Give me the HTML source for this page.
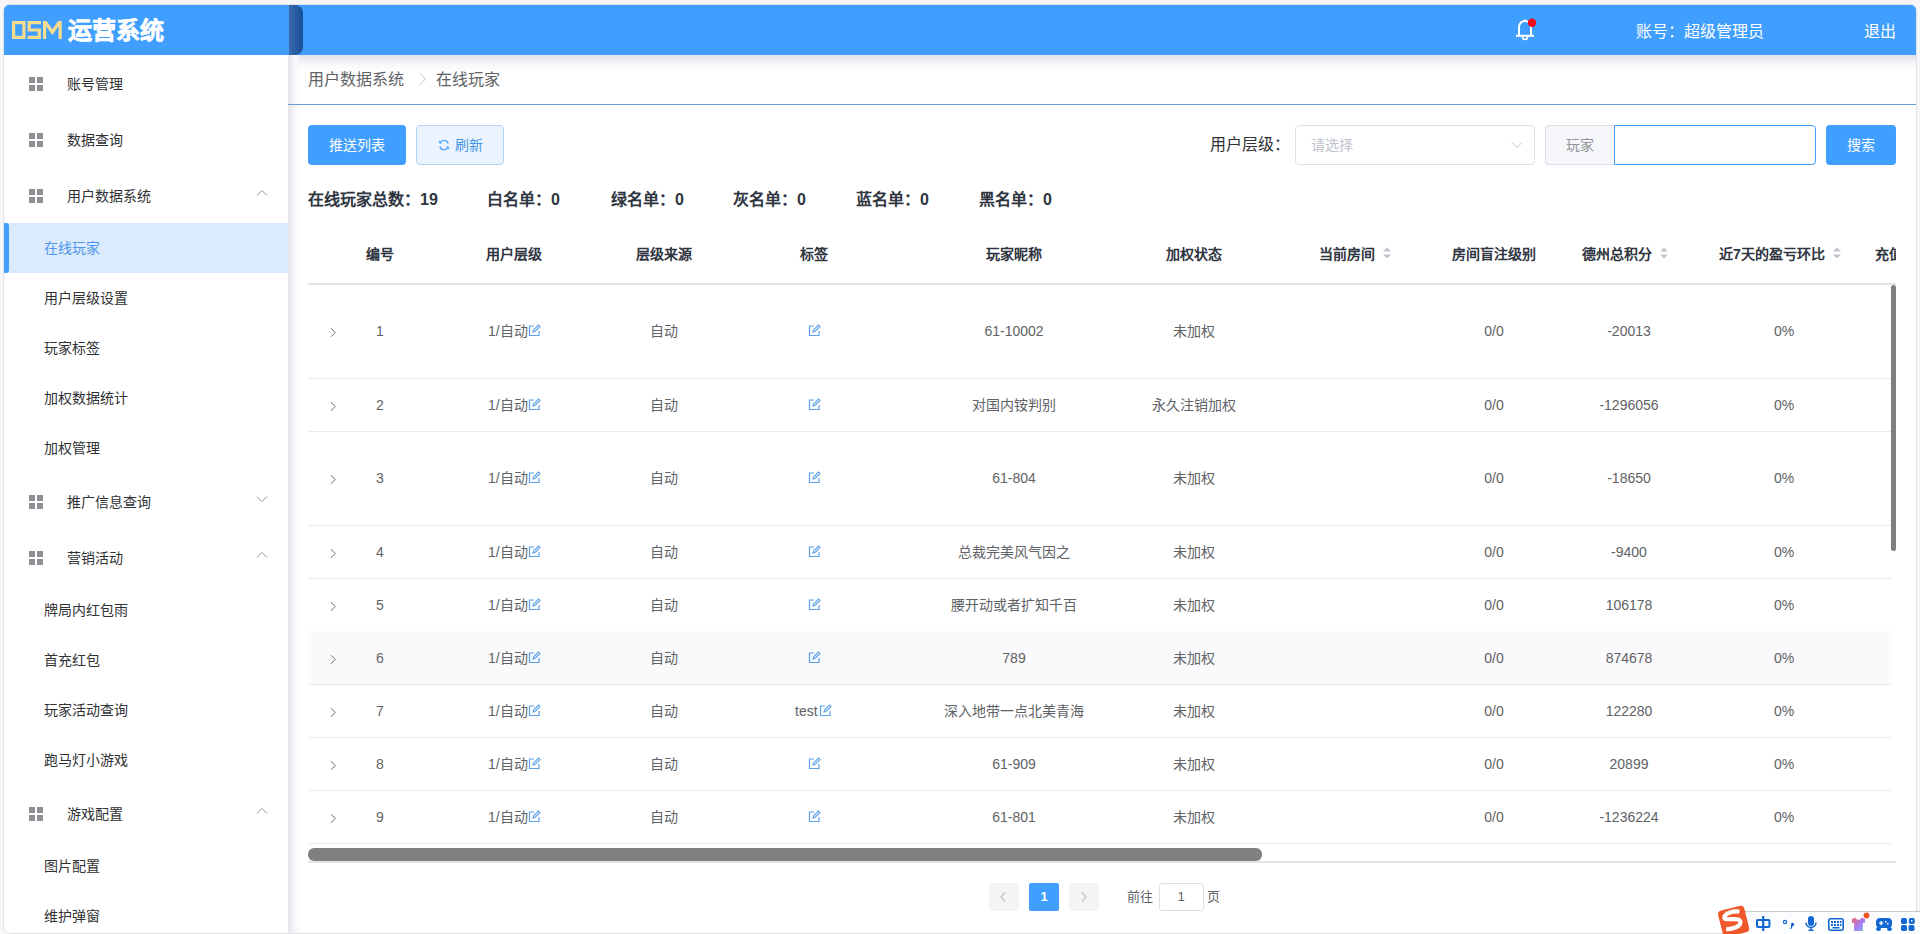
<!DOCTYPE html><html lang="zh-CN"><head><meta charset="utf-8"><style>
*{box-sizing:border-box;margin:0;padding:0}
html,body{width:1920px;height:934px;overflow:hidden}
body{background:#f6f5f7;font-family:"Liberation Sans",sans-serif;color:#303133;position:relative}
.abs{position:absolute}
.t{position:absolute;white-space:nowrap;line-height:20px;height:20px}
.c{transform:translateX(-50%)}
#header{left:4px;top:5px;width:1912px;height:50px;background:#409eff;border-radius:5px 5px 0 0;z-index:3}
#side{left:4px;top:55px;width:284px;height:878px;background:#fff;z-index:2;border-radius:0 0 0 8px}
#main{left:288px;top:55px;width:1628px;height:878px;background:#fff;z-index:0;border-radius:0 0 8px 0}
.mi{font-size:14px;color:#303133}
.grid{position:absolute;left:29px;width:14px;height:14px}
.grid i{position:absolute;width:6px;height:6px;background:#8f8f95}
.th{font-size:14px;font-weight:bold;color:#2f3540}
.td{font-size:14px;color:#606266}
.hl{position:absolute;left:308px;width:1584px;height:1px;background:#ebebef}
</style></head><body>
<div class="abs" style="left:3px;top:4px;width:1914px;height:930px;border:1px solid #e2e1e5;border-radius:6px 6px 9px 9px;background:#fff"></div>
<div id="header" class="abs">
<svg class="abs" style="left:4px;top:11px" width="56" height="24" viewBox="8 16 56 24">
<g fill="#f8dc8e">
<path d="M12 21h13.5v18H12z M15.2 24.2v11.6h7.1V24.2z" fill-rule="evenodd"/>
<path d="M27.6 21h13.3v3.2H30.8v4.2h10.1V39H27.6v-3.2h10.1v-4.2H27.6z"/>
<path d="M43 39V21h3.6l5.75 8.2L58.1 21h3.65v18h-3.2V26.3l-6.2 8.6-6.2-8.6V39z"/>
</g></svg>
<div class="t" style="left:64px;top:11px;height:30px;line-height:30px;font-size:24px;font-weight:bold;color:#fff;-webkit-text-stroke:0.5px #fff">运营系统</div>
</div>
<div class="abs" style="left:289px;top:5px;width:14px;height:50px;z-index:4;background:linear-gradient(90deg,#3a6aad,#174e98);border-radius:0 8px 8px 0"></div>
<svg class="abs" style="left:1512px;top:16px;z-index:5" width="26" height="26" viewBox="1512 16 26 26">
<path d="M1519 35.5V27a6 6 0 0 1 12 0v8.5" fill="none" stroke="#fff" stroke-width="2"/>
<path d="M1516 35.8h18" stroke="#fff" stroke-width="2"/>
<path d="M1522.5 37a2.5 2.5 0 0 0 5 0" fill="none" stroke="#fff" stroke-width="1.6"/>
<circle cx="1525" cy="20.6" r="1.2" fill="#fff"/>
<circle cx="1532" cy="22.8" r="4.2" fill="#f5081a"/>
</svg>
<div class="t" style="left:1636px;top:22px;font-size:16px;color:#fff;z-index:5">账号：超级管理员</div>
<div class="t" style="left:1864px;top:22px;font-size:16px;color:#fff;z-index:5">退出</div>
<div id="side" class="abs"></div>
<div class="grid" style="top:77px;z-index:3"><i style="left:0;top:0"></i><i style="left:8px;top:0"></i><i style="left:0;top:8px"></i><i style="left:8px;top:8px"></i></div>
<div class="t mi" style="left:67px;top:74px;z-index:3">账号管理</div>
<div class="grid" style="top:133px;z-index:3"><i style="left:0;top:0"></i><i style="left:8px;top:0"></i><i style="left:0;top:8px"></i><i style="left:8px;top:8px"></i></div>
<div class="t mi" style="left:67px;top:130px;z-index:3">数据查询</div>
<div class="grid" style="top:189px;z-index:3"><i style="left:0;top:0"></i><i style="left:8px;top:0"></i><i style="left:0;top:8px"></i><i style="left:8px;top:8px"></i></div>
<div class="t mi" style="left:67px;top:186px;z-index:3">用户数据系统</div>
<svg class="abs" style="left:256px;top:189px;z-index:3" width="12" height="8" viewBox="0 0 12 8"><path d="M1 6.5L6 1.5L11 6.5" fill="none" stroke="#909399" stroke-width="1"/></svg>
<div class="abs" style="left:4px;top:223px;width:284px;height:50px;background:#dbeafc;z-index:3"></div>
<div class="abs" style="left:4px;top:223px;width:5px;height:50px;background:#409eff;border-radius:0 3px 3px 0;z-index:3"></div>
<div class="t mi" style="left:44px;top:238px;color:#4e97e8;z-index:4">在线玩家</div>
<div class="t mi" style="left:44px;top:288px;z-index:3">用户层级设置</div>
<div class="t mi" style="left:44px;top:338px;z-index:3">玩家标签</div>
<div class="t mi" style="left:44px;top:388px;z-index:3">加权数据统计</div>
<div class="t mi" style="left:44px;top:438px;z-index:3">加权管理</div>
<div class="grid" style="top:495px;z-index:3"><i style="left:0;top:0"></i><i style="left:8px;top:0"></i><i style="left:0;top:8px"></i><i style="left:8px;top:8px"></i></div>
<div class="t mi" style="left:67px;top:492px;z-index:3">推广信息查询</div>
<svg class="abs" style="left:256px;top:495px;z-index:3" width="12" height="8" viewBox="0 0 12 8"><path d="M1 1.5L6 6.5L11 1.5" fill="none" stroke="#909399" stroke-width="1"/></svg>
<div class="grid" style="top:551px;z-index:3"><i style="left:0;top:0"></i><i style="left:8px;top:0"></i><i style="left:0;top:8px"></i><i style="left:8px;top:8px"></i></div>
<div class="t mi" style="left:67px;top:548px;z-index:3">营销活动</div>
<svg class="abs" style="left:256px;top:551px;z-index:3" width="12" height="8" viewBox="0 0 12 8"><path d="M1 6.5L6 1.5L11 6.5" fill="none" stroke="#909399" stroke-width="1"/></svg>
<div class="t mi" style="left:44px;top:600px;z-index:3">牌局内红包雨</div>
<div class="t mi" style="left:44px;top:650px;z-index:3">首充红包</div>
<div class="t mi" style="left:44px;top:700px;z-index:3">玩家活动查询</div>
<div class="t mi" style="left:44px;top:750px;z-index:3">跑马灯小游戏</div>
<div class="grid" style="top:807px;z-index:3"><i style="left:0;top:0"></i><i style="left:8px;top:0"></i><i style="left:0;top:8px"></i><i style="left:8px;top:8px"></i></div>
<div class="t mi" style="left:67px;top:804px;z-index:3">游戏配置</div>
<svg class="abs" style="left:256px;top:807px;z-index:3" width="12" height="8" viewBox="0 0 12 8"><path d="M1 6.5L6 1.5L11 6.5" fill="none" stroke="#909399" stroke-width="1"/></svg>
<div class="t mi" style="left:44px;top:856px;z-index:3">图片配置</div>
<div class="t mi" style="left:44px;top:906px;z-index:3">维护弹窗</div>
<div id="main" class="abs"></div>
<div class="abs" style="left:288px;top:55px;width:1628px;height:16px;background:linear-gradient(180deg,#e2e1e6 0,#e8e7eb 3px,#f6f5f8 8px,rgba(255,255,255,0) 16px)"></div>
<div class="abs" style="left:288px;top:55px;width:13px;height:878px;background:linear-gradient(90deg,#e4e3e7 0,#efeef2 4px,#f8f7fa 8px,rgba(255,255,255,0) 13px)"></div>
<div class="t" style="left:308px;top:70px;font-size:16px;color:#606266">用户数据系统</div>
<svg class="abs" style="left:418px;top:72px" width="10" height="14" viewBox="0 0 10 14"><path d="M1.5 1L7.5 7L1.5 13" fill="none" stroke="#c0c4cc" stroke-width="1"/></svg>
<div class="t" style="left:436px;top:70px;font-size:16px;color:#606266">在线玩家</div>
<div class="abs" style="left:288px;top:104px;width:1628px;height:1px;background:#6a9bd0"></div>
<div class="abs" style="left:308px;top:125px;width:98px;height:40px;background:#409eff;border-radius:4px"></div>
<div class="t" style="left:329px;top:135px;font-size:14px;color:#fff">推送列表</div>
<div class="abs" style="left:416px;top:125px;width:88px;height:40px;background:#ebf4fe;border:1px solid #b4d2f2;border-radius:4px"></div>
<svg class="abs" style="left:438px;top:139px" width="12" height="12" viewBox="0 0 12 12"><path d="M10.2 4.5A4.5 4.5 0 0 0 2 3.5M1.8 7.5A4.5 4.5 0 0 0 10 8.5" fill="none" stroke="#409eff" stroke-width="1.2"/><path d="M1.2 1.5v3h3z M10.8 10.5v-3h-3z" fill="#409eff"/></svg>
<div class="t" style="left:455px;top:135px;font-size:14px;color:#4896e8">刷新</div>
<div class="t" style="left:1210px;top:135px;font-size:16px;color:#303133">用户层级：</div>
<div class="abs" style="left:1295px;top:125px;width:240px;height:40px;border:1px solid #dcdfe6;border-radius:4px;background:#fff"></div>
<div class="t" style="left:1311px;top:135px;font-size:14px;color:#c0c4cc">请选择</div>
<svg class="abs" style="left:1511px;top:140px" width="12" height="10" viewBox="0 0 12 10"><path d="M1 2.5L6 7.5L11 2.5" fill="none" stroke="#c0c4cc" stroke-width="1"/></svg>
<div class="abs" style="left:1545px;top:125px;width:70px;height:40px;border:1px solid #dcdfe6;border-right:none;border-radius:4px 0 0 4px;background:#f5f7fa"></div>
<div class="t" style="left:1566px;top:135px;font-size:14px;color:#909399">玩家</div>
<div class="abs" style="left:1614px;top:125px;width:202px;height:40px;border:1px solid #409eff;border-radius:0 4px 4px 0;background:#fff"></div>
<div class="abs" style="left:1826px;top:125px;width:70px;height:40px;background:#409eff;border-radius:4px"></div>
<div class="t" style="left:1847px;top:135px;font-size:14px;color:#fff">搜索</div>
<div class="t" style="left:308px;top:190px;font-size:16px;font-weight:bold;color:#2f3540">在线玩家总数：19</div>
<div class="t" style="left:487px;top:190px;font-size:16px;font-weight:bold;color:#2f3540">白名单：0</div>
<div class="t" style="left:611px;top:190px;font-size:16px;font-weight:bold;color:#2f3540">绿名单：0</div>
<div class="t" style="left:733px;top:190px;font-size:16px;font-weight:bold;color:#2f3540">灰名单：0</div>
<div class="t" style="left:856px;top:190px;font-size:16px;font-weight:bold;color:#2f3540">蓝名单：0</div>
<div class="t" style="left:979px;top:190px;font-size:16px;font-weight:bold;color:#2f3540">黑名单：0</div>
<div class="t c th" style="left:380px;top:244px">编号</div>
<div class="t c th" style="left:514px;top:244px">用户层级</div>
<div class="t c th" style="left:664px;top:244px">层级来源</div>
<div class="t c th" style="left:814px;top:244px">标签</div>
<div class="t c th" style="left:1014px;top:244px">玩家昵称</div>
<div class="t c th" style="left:1194px;top:244px">加权状态</div>
<div class="t c th" style="left:1347px;top:244px">当前房间</div>
<div class="t c th" style="left:1494px;top:244px">房间盲注级别</div>
<div class="t c th" style="left:1617px;top:244px">德州总积分</div>
<div class="t c th" style="left:1772px;top:244px">近7天的盈亏环比</div>
<div class="t th" style="left:1875px;top:244px;width:21px;overflow:hidden">充值</div>
<div class="abs" style="left:308px;top:283px;width:1588px;height:2px;background:#e3e4e8"></div>
<div class="hl" style="top:378px"></div>
<svg class="abs" style="left:329px;top:327px" width="8" height="12" viewBox="0 0 8 12"><path d="M2 1.2L6.2 5.5L2 9.8" fill="none" stroke="#696b70" stroke-width="1"/></svg>
<div class="t c td" style="left:380px;top:321px">1</div>
<div class="t td" style="left:488px;top:321px">1/自动</div>
<svg class="abs" style="left:528px;top:324px" width="13" height="13" viewBox="0 0 13 13"><path d="M6 2H1.5v9.5H11V7" fill="none" stroke="#5aa0ea" stroke-width="1.2"/><path d="M5 8l0.5-2L10.5 1l1.5 1.5L7 7.5z" fill="none" stroke="#5aa0ea" stroke-width="1.1"/></svg>
<div class="t c td" style="left:664px;top:321px">自动</div>
<svg class="abs" style="left:808px;top:324px" width="13" height="13" viewBox="0 0 13 13"><path d="M6 2H1.5v9.5H11V7" fill="none" stroke="#5aa0ea" stroke-width="1.2"/><path d="M5 8l0.5-2L10.5 1l1.5 1.5L7 7.5z" fill="none" stroke="#5aa0ea" stroke-width="1.1"/></svg>
<div class="t c td" style="left:1014px;top:321px">61-10002</div>
<div class="t c td" style="left:1194px;top:321px">未加权</div>
<div class="t c td" style="left:1494px;top:321px">0/0</div>
<div class="t c td" style="left:1629px;top:321px">-20013</div>
<div class="t c td" style="left:1784px;top:321px">0%</div>
<div class="hl" style="top:431px"></div>
<svg class="abs" style="left:329px;top:401px" width="8" height="12" viewBox="0 0 8 12"><path d="M2 1.2L6.2 5.5L2 9.8" fill="none" stroke="#696b70" stroke-width="1"/></svg>
<div class="t c td" style="left:380px;top:395px">2</div>
<div class="t td" style="left:488px;top:395px">1/自动</div>
<svg class="abs" style="left:528px;top:398px" width="13" height="13" viewBox="0 0 13 13"><path d="M6 2H1.5v9.5H11V7" fill="none" stroke="#5aa0ea" stroke-width="1.2"/><path d="M5 8l0.5-2L10.5 1l1.5 1.5L7 7.5z" fill="none" stroke="#5aa0ea" stroke-width="1.1"/></svg>
<div class="t c td" style="left:664px;top:395px">自动</div>
<svg class="abs" style="left:808px;top:398px" width="13" height="13" viewBox="0 0 13 13"><path d="M6 2H1.5v9.5H11V7" fill="none" stroke="#5aa0ea" stroke-width="1.2"/><path d="M5 8l0.5-2L10.5 1l1.5 1.5L7 7.5z" fill="none" stroke="#5aa0ea" stroke-width="1.1"/></svg>
<div class="t c td" style="left:1014px;top:395px">对国内铵判别</div>
<div class="t c td" style="left:1194px;top:395px">永久注销加权</div>
<div class="t c td" style="left:1494px;top:395px">0/0</div>
<div class="t c td" style="left:1629px;top:395px">-1296056</div>
<div class="t c td" style="left:1784px;top:395px">0%</div>
<div class="hl" style="top:525px"></div>
<svg class="abs" style="left:329px;top:474px" width="8" height="12" viewBox="0 0 8 12"><path d="M2 1.2L6.2 5.5L2 9.8" fill="none" stroke="#696b70" stroke-width="1"/></svg>
<div class="t c td" style="left:380px;top:468px">3</div>
<div class="t td" style="left:488px;top:468px">1/自动</div>
<svg class="abs" style="left:528px;top:471px" width="13" height="13" viewBox="0 0 13 13"><path d="M6 2H1.5v9.5H11V7" fill="none" stroke="#5aa0ea" stroke-width="1.2"/><path d="M5 8l0.5-2L10.5 1l1.5 1.5L7 7.5z" fill="none" stroke="#5aa0ea" stroke-width="1.1"/></svg>
<div class="t c td" style="left:664px;top:468px">自动</div>
<svg class="abs" style="left:808px;top:471px" width="13" height="13" viewBox="0 0 13 13"><path d="M6 2H1.5v9.5H11V7" fill="none" stroke="#5aa0ea" stroke-width="1.2"/><path d="M5 8l0.5-2L10.5 1l1.5 1.5L7 7.5z" fill="none" stroke="#5aa0ea" stroke-width="1.1"/></svg>
<div class="t c td" style="left:1014px;top:468px">61-804</div>
<div class="t c td" style="left:1194px;top:468px">未加权</div>
<div class="t c td" style="left:1494px;top:468px">0/0</div>
<div class="t c td" style="left:1629px;top:468px">-18650</div>
<div class="t c td" style="left:1784px;top:468px">0%</div>
<div class="hl" style="top:578px"></div>
<svg class="abs" style="left:329px;top:548px" width="8" height="12" viewBox="0 0 8 12"><path d="M2 1.2L6.2 5.5L2 9.8" fill="none" stroke="#696b70" stroke-width="1"/></svg>
<div class="t c td" style="left:380px;top:542px">4</div>
<div class="t td" style="left:488px;top:542px">1/自动</div>
<svg class="abs" style="left:528px;top:545px" width="13" height="13" viewBox="0 0 13 13"><path d="M6 2H1.5v9.5H11V7" fill="none" stroke="#5aa0ea" stroke-width="1.2"/><path d="M5 8l0.5-2L10.5 1l1.5 1.5L7 7.5z" fill="none" stroke="#5aa0ea" stroke-width="1.1"/></svg>
<div class="t c td" style="left:664px;top:542px">自动</div>
<svg class="abs" style="left:808px;top:545px" width="13" height="13" viewBox="0 0 13 13"><path d="M6 2H1.5v9.5H11V7" fill="none" stroke="#5aa0ea" stroke-width="1.2"/><path d="M5 8l0.5-2L10.5 1l1.5 1.5L7 7.5z" fill="none" stroke="#5aa0ea" stroke-width="1.1"/></svg>
<div class="t c td" style="left:1014px;top:542px">总裁完美风气因之</div>
<div class="t c td" style="left:1194px;top:542px">未加权</div>
<div class="t c td" style="left:1494px;top:542px">0/0</div>
<div class="t c td" style="left:1629px;top:542px">-9400</div>
<div class="t c td" style="left:1784px;top:542px">0%</div>
<div class="hl" style="top:631px"></div>
<svg class="abs" style="left:329px;top:601px" width="8" height="12" viewBox="0 0 8 12"><path d="M2 1.2L6.2 5.5L2 9.8" fill="none" stroke="#696b70" stroke-width="1"/></svg>
<div class="t c td" style="left:380px;top:595px">5</div>
<div class="t td" style="left:488px;top:595px">1/自动</div>
<svg class="abs" style="left:528px;top:598px" width="13" height="13" viewBox="0 0 13 13"><path d="M6 2H1.5v9.5H11V7" fill="none" stroke="#5aa0ea" stroke-width="1.2"/><path d="M5 8l0.5-2L10.5 1l1.5 1.5L7 7.5z" fill="none" stroke="#5aa0ea" stroke-width="1.1"/></svg>
<div class="t c td" style="left:664px;top:595px">自动</div>
<svg class="abs" style="left:808px;top:598px" width="13" height="13" viewBox="0 0 13 13"><path d="M6 2H1.5v9.5H11V7" fill="none" stroke="#5aa0ea" stroke-width="1.2"/><path d="M5 8l0.5-2L10.5 1l1.5 1.5L7 7.5z" fill="none" stroke="#5aa0ea" stroke-width="1.1"/></svg>
<div class="t c td" style="left:1014px;top:595px">腰开动或者扩知千百</div>
<div class="t c td" style="left:1194px;top:595px">未加权</div>
<div class="t c td" style="left:1494px;top:595px">0/0</div>
<div class="t c td" style="left:1629px;top:595px">106178</div>
<div class="t c td" style="left:1784px;top:595px">0%</div>
<div class="abs" style="left:308px;top:631px;width:1584px;height:53px;background:#faf9fb"></div>
<div class="hl" style="top:684px"></div>
<svg class="abs" style="left:329px;top:654px" width="8" height="12" viewBox="0 0 8 12"><path d="M2 1.2L6.2 5.5L2 9.8" fill="none" stroke="#696b70" stroke-width="1"/></svg>
<div class="t c td" style="left:380px;top:648px">6</div>
<div class="t td" style="left:488px;top:648px">1/自动</div>
<svg class="abs" style="left:528px;top:651px" width="13" height="13" viewBox="0 0 13 13"><path d="M6 2H1.5v9.5H11V7" fill="none" stroke="#5aa0ea" stroke-width="1.2"/><path d="M5 8l0.5-2L10.5 1l1.5 1.5L7 7.5z" fill="none" stroke="#5aa0ea" stroke-width="1.1"/></svg>
<div class="t c td" style="left:664px;top:648px">自动</div>
<svg class="abs" style="left:808px;top:651px" width="13" height="13" viewBox="0 0 13 13"><path d="M6 2H1.5v9.5H11V7" fill="none" stroke="#5aa0ea" stroke-width="1.2"/><path d="M5 8l0.5-2L10.5 1l1.5 1.5L7 7.5z" fill="none" stroke="#5aa0ea" stroke-width="1.1"/></svg>
<div class="t c td" style="left:1014px;top:648px">789</div>
<div class="t c td" style="left:1194px;top:648px">未加权</div>
<div class="t c td" style="left:1494px;top:648px">0/0</div>
<div class="t c td" style="left:1629px;top:648px">874678</div>
<div class="t c td" style="left:1784px;top:648px">0%</div>
<div class="hl" style="top:737px"></div>
<svg class="abs" style="left:329px;top:707px" width="8" height="12" viewBox="0 0 8 12"><path d="M2 1.2L6.2 5.5L2 9.8" fill="none" stroke="#696b70" stroke-width="1"/></svg>
<div class="t c td" style="left:380px;top:701px">7</div>
<div class="t td" style="left:488px;top:701px">1/自动</div>
<svg class="abs" style="left:528px;top:704px" width="13" height="13" viewBox="0 0 13 13"><path d="M6 2H1.5v9.5H11V7" fill="none" stroke="#5aa0ea" stroke-width="1.2"/><path d="M5 8l0.5-2L10.5 1l1.5 1.5L7 7.5z" fill="none" stroke="#5aa0ea" stroke-width="1.1"/></svg>
<div class="t c td" style="left:664px;top:701px">自动</div>
<div class="t td" style="left:795px;top:701px">test</div>
<svg class="abs" style="left:819px;top:704px" width="13" height="13" viewBox="0 0 13 13"><path d="M6 2H1.5v9.5H11V7" fill="none" stroke="#5aa0ea" stroke-width="1.2"/><path d="M5 8l0.5-2L10.5 1l1.5 1.5L7 7.5z" fill="none" stroke="#5aa0ea" stroke-width="1.1"/></svg>
<div class="t c td" style="left:1014px;top:701px">深入地带一点北美青海</div>
<div class="t c td" style="left:1194px;top:701px">未加权</div>
<div class="t c td" style="left:1494px;top:701px">0/0</div>
<div class="t c td" style="left:1629px;top:701px">122280</div>
<div class="t c td" style="left:1784px;top:701px">0%</div>
<div class="hl" style="top:790px"></div>
<svg class="abs" style="left:329px;top:760px" width="8" height="12" viewBox="0 0 8 12"><path d="M2 1.2L6.2 5.5L2 9.8" fill="none" stroke="#696b70" stroke-width="1"/></svg>
<div class="t c td" style="left:380px;top:754px">8</div>
<div class="t td" style="left:488px;top:754px">1/自动</div>
<svg class="abs" style="left:528px;top:757px" width="13" height="13" viewBox="0 0 13 13"><path d="M6 2H1.5v9.5H11V7" fill="none" stroke="#5aa0ea" stroke-width="1.2"/><path d="M5 8l0.5-2L10.5 1l1.5 1.5L7 7.5z" fill="none" stroke="#5aa0ea" stroke-width="1.1"/></svg>
<div class="t c td" style="left:664px;top:754px">自动</div>
<svg class="abs" style="left:808px;top:757px" width="13" height="13" viewBox="0 0 13 13"><path d="M6 2H1.5v9.5H11V7" fill="none" stroke="#5aa0ea" stroke-width="1.2"/><path d="M5 8l0.5-2L10.5 1l1.5 1.5L7 7.5z" fill="none" stroke="#5aa0ea" stroke-width="1.1"/></svg>
<div class="t c td" style="left:1014px;top:754px">61-909</div>
<div class="t c td" style="left:1194px;top:754px">未加权</div>
<div class="t c td" style="left:1494px;top:754px">0/0</div>
<div class="t c td" style="left:1629px;top:754px">20899</div>
<div class="t c td" style="left:1784px;top:754px">0%</div>
<div class="hl" style="top:843px"></div>
<svg class="abs" style="left:329px;top:813px" width="8" height="12" viewBox="0 0 8 12"><path d="M2 1.2L6.2 5.5L2 9.8" fill="none" stroke="#696b70" stroke-width="1"/></svg>
<div class="t c td" style="left:380px;top:807px">9</div>
<div class="t td" style="left:488px;top:807px">1/自动</div>
<svg class="abs" style="left:528px;top:810px" width="13" height="13" viewBox="0 0 13 13"><path d="M6 2H1.5v9.5H11V7" fill="none" stroke="#5aa0ea" stroke-width="1.2"/><path d="M5 8l0.5-2L10.5 1l1.5 1.5L7 7.5z" fill="none" stroke="#5aa0ea" stroke-width="1.1"/></svg>
<div class="t c td" style="left:664px;top:807px">自动</div>
<svg class="abs" style="left:808px;top:810px" width="13" height="13" viewBox="0 0 13 13"><path d="M6 2H1.5v9.5H11V7" fill="none" stroke="#5aa0ea" stroke-width="1.2"/><path d="M5 8l0.5-2L10.5 1l1.5 1.5L7 7.5z" fill="none" stroke="#5aa0ea" stroke-width="1.1"/></svg>
<div class="t c td" style="left:1014px;top:807px">61-801</div>
<div class="t c td" style="left:1194px;top:807px">未加权</div>
<div class="t c td" style="left:1494px;top:807px">0/0</div>
<div class="t c td" style="left:1629px;top:807px">-1236224</div>
<div class="t c td" style="left:1784px;top:807px">0%</div>
<div class="abs" style="left:1891px;top:285px;width:5px;height:266px;background:#7f7f81;border-radius:3px"></div>
<div class="abs" style="left:308px;top:848px;width:954px;height:13px;background:#808082;border-radius:6px"></div>
<div class="abs" style="left:308px;top:861px;width:1588px;height:2px;background:#e4e4e8"></div>
<div class="abs" style="left:989px;top:883px;width:30px;height:28px;background:#f4f4f5;border-radius:2px"></div>
<svg class="abs" style="left:998px;top:891px" width="10" height="12" viewBox="0 0 10 12"><path d="M7 1.5L3 6L7 10.5" fill="none" stroke="#c0c4cc" stroke-width="1.3"/></svg>
<div class="abs" style="left:1029px;top:883px;width:30px;height:28px;background:#409eff;border-radius:2px"></div>
<div class="t c" style="left:1044px;top:887px;font-size:13px;font-weight:bold;color:#fff">1</div>
<div class="abs" style="left:1069px;top:883px;width:30px;height:28px;background:#f4f4f5;border-radius:2px"></div>
<svg class="abs" style="left:1079px;top:891px" width="10" height="12" viewBox="0 0 10 12"><path d="M3 1.5L7 6L3 10.5" fill="none" stroke="#c0c4cc" stroke-width="1.3"/></svg>
<div class="t" style="left:1127px;top:887px;font-size:13px;color:#606266">前往</div>
<div class="abs" style="left:1159px;top:883px;width:45px;height:28px;border:1px solid #dcdfe6;border-radius:3px;background:#fff"></div>
<div class="t c" style="left:1181px;top:887px;font-size:13px;color:#606266">1</div>
<div class="t" style="left:1207px;top:887px;font-size:13px;color:#606266">页</div>
<svg class="abs" style="left:1382px;top:246px" width="10" height="14" viewBox="0 0 10 14"><path d="M5 1.5L9 5.5H1z M5 12.5L9 8.5H1z" fill="#c0c4cc"/></svg>
<svg class="abs" style="left:1659px;top:246px" width="10" height="14" viewBox="0 0 10 14"><path d="M5 1.5L9 5.5H1z M5 12.5L9 8.5H1z" fill="#c0c4cc"/></svg>
<svg class="abs" style="left:1832px;top:246px" width="10" height="14" viewBox="0 0 10 14"><path d="M5 1.5L9 5.5H1z M5 12.5L9 8.5H1z" fill="#c0c4cc"/></svg>
<div class="abs" style="left:1744px;top:911px;width:176px;height:23px;background:#fbfdff;border-top:1px solid #c3c9d1;border-left:none;z-index:7"></div>
<svg class="abs" style="left:1716px;top:905px;z-index:8" width="204" height="29" viewBox="1716 905 204 29">
<g transform="rotate(-14 1733 921)"><rect x="1720" y="908" width="27" height="27" rx="4" fill="#f0582a"/>
<path d="M1741.5 913.5C1736 911 1727 911.5 1725.5 915.5C1724 919.5 1740.5 918 1740 923.5C1739.5 928.5 1729 929 1724.5 927" fill="none" stroke="#fff" stroke-width="4.2" stroke-linecap="butt"/></g>
<g fill="#1267d3">
<rect x="1757" y="920" width="12.4" height="7" rx="0.8" fill="none" stroke="#1267d3" stroke-width="2"/><rect x="1762.1" y="916" width="2.2" height="15"/>
<circle cx="1785" cy="922" r="1.6" fill="none" stroke="#1267d3" stroke-width="1.2"/>
<path d="M1791 924.5a1.6 1.6 0 1 1 1.5 1.5c0 1.5-.8 2.6-2 3.2l-.5-.6c.8-.5 1.2-1.2 1-2.1z"/>
<rect x="1808" y="916" width="6" height="10" rx="3"/>
<path d="M1806 922.5a5 5 0 0 0 10 0" fill="none" stroke="#1267d3" stroke-width="1.4"/>
<rect x="1810.3" y="927" width="1.4" height="3"/><rect x="1808.5" y="929.5" width="5" height="1.5"/>
<rect x="1828.8" y="918.8" width="14.4" height="11.4" rx="1.5" fill="none" stroke="#1267d3" stroke-width="1.6"/><path d="M1831 921h2v2h-2z M1834 921h2v2h-2z M1837 921h2v2h-2z M1840 921h1.5v2h-1.5z M1831 924h2v2h-2z M1834 924h2v2h-2z M1837 924h2v2h-2z M1840 924h1.5v2h-1.5z M1832.5 927h7v1.6h-7z"/>
<path d="M1880 918h8a4 4 0 0 1 4 4v2a4 4 0 0 1-4 4h-8a4 4 0 0 1-4-4v-2a4 4 0 0 1 4-4z M1879 922.5v1.3h1.5v1.5h1.3v-1.5h1.5v-1.3h-1.5v-1.5h-1.3v1.5z M1885 921v1.5h1.5v-1.5z M1887 923v1.5h1.5v-1.5z" fill-rule="evenodd"/>
<ellipse cx="1878.5" cy="929" rx="2.5" ry="2"/><ellipse cx="1889.5" cy="929" rx="2.5" ry="2"/>
<rect x="1901" y="918" width="6" height="6" rx="1.8"/><path d="M1909 918h4a1.8 1.8 0 0 1 1.8 1.8v2.4a1.8 1.8 0 0 1-1.8 1.8h-2.4a1.8 1.8 0 0 1-1.8-1.8v-2.4a1.8 1.8 0 0 1 1.8-1.8z M1911 920v1.5h1.5v-1.5z" fill-rule="evenodd"/>
<rect x="1901" y="925" width="6" height="6" rx="1.8"/><rect x="1908.5" y="925" width="6" height="6" rx="1.8"/>
</g>
<defs><linearGradient id="shirt" x1="0" y1="0" x2="1" y2="1"><stop offset="0" stop-color="#f06a6a"/><stop offset=".55" stop-color="#a77af5"/><stop offset="1" stop-color="#7cc0f5"/></linearGradient></defs>
<path d="M1852 919l3.5-1.5c.5 1.5 1.7 2.3 3 2.3s2.5-.8 3-2.3l3.5 1.5v4h-2.2v8h-8.6v-8h-2.2z" fill="url(#shirt)"/>
<circle cx="1866.5" cy="915.5" r="3" fill="#f2592a"/>
</svg>
</body></html>
